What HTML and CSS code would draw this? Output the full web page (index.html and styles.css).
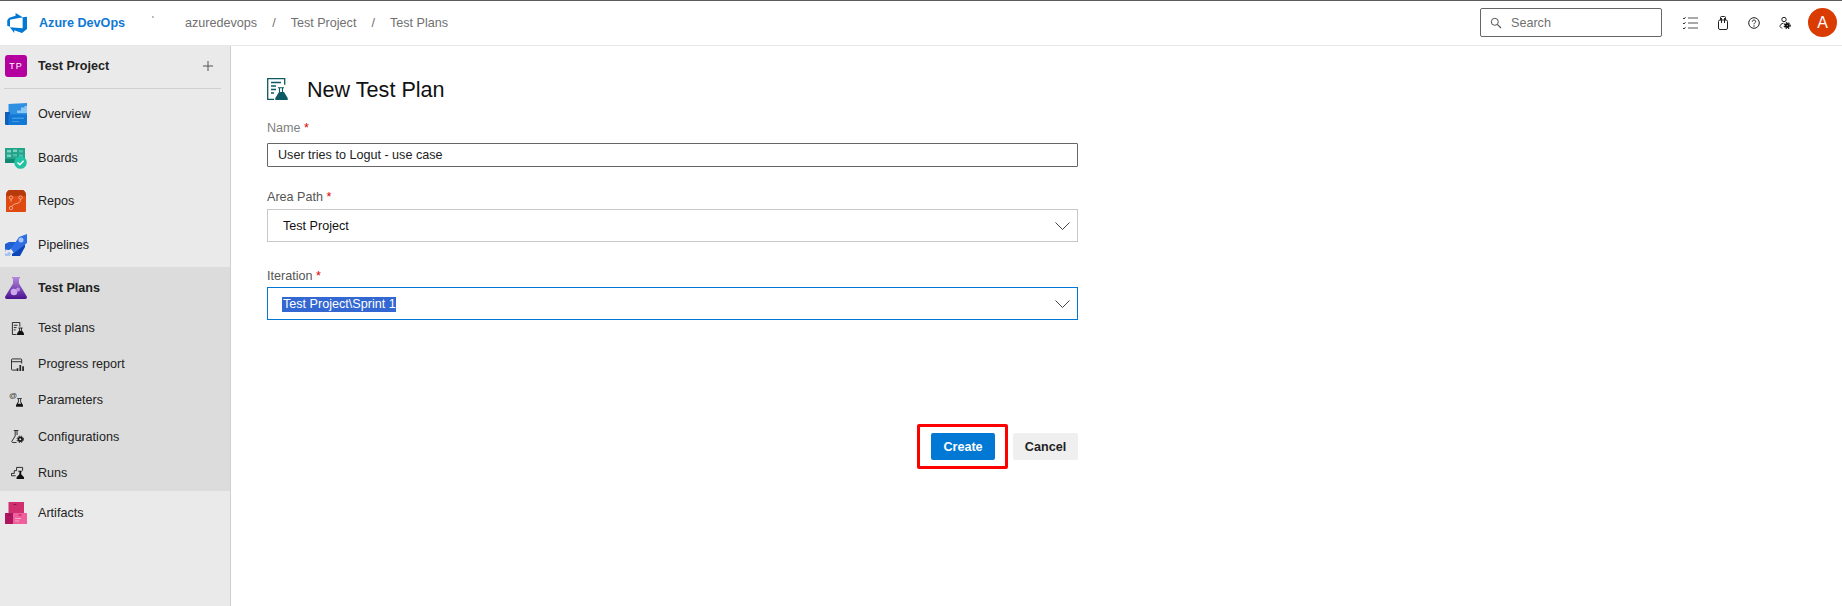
FILE: index.html
```html
<!DOCTYPE html>
<html lang="en">
<head>
<meta charset="utf-8">
<title>New Test Plan</title>
<link rel="stylesheet" href="styles.css">
</head>
<body>
<header class="topbar">
  <div class="brand">
    <svg class="brand-logo" width="20" height="20" viewBox="1 1 16 16"><path fill="#0078d4" d="M17 4v9.740l-4 3.280-6.200-2.260V17l-3.510-4.590 10.230.8V4.440zm-3.410.49L7.850 1v2.290L2.730 4.800 1.200 6.740v4.380l2.180.96V6.430z"/></svg>
    <span class="brand-name">Azure DevOps</span>
  </div>
  <span class="tick">'</span>
  <nav class="crumbs">
    <span>azuredevops</span><span class="sep">/</span><span>Test Project</span><span class="sep">/</span><span>Test Plans</span>
  </nav>
  <div class="search">
    <svg width="12" height="12" viewBox="0 0 12 12"><circle cx="4.800" cy="4.800" r="3.500" fill="none" stroke="#555" stroke-width="1"/><path d="M7.300 7.300 11 11" stroke="#555" stroke-width="1.200"/></svg>
    <span>Search</span>
  </div>
  <div class="tools">
    <svg width="16" height="14" viewBox="0 0 16 14" fill="none" stroke="#333"><path d="M6 2h10M6 7h10M6 12h10" stroke="#555" stroke-width="1.100"/><path d="M1 2 2 3 3.500 1.200M1 7 2 8 3.500 6.200M1 12 2 13 3.500 11.200" stroke-width="1"/></svg>
    <svg width="10" height="14" viewBox="0 0 10 14" fill="none" stroke="#222"><rect x=".5" y="4" width="9" height="9.500" rx="1.500"/><path d="M2.500 4V1.500a1 1 0 0 1 1-1h3a1 1 0 0 1 1 1V4M3.500 2v5M6.500 2v5"/></svg>
    <svg width="12" height="12" viewBox="0 0 12 12" fill="none"><circle cx="6" cy="6" r="5.300" stroke="#222"/><path d="M4.300 4.700C4.300 3.700 5 3.100 6 3.100s1.700.6 1.700 1.500C7.700 5.800 6 5.800 6 7.300" stroke="#222"/><circle cx="6" cy="9" r=".7" fill="#222"/></svg>
    <svg width="14" height="14" viewBox="0 0 14 14" fill="none"><circle cx="5" cy="3.500" r="2.200" stroke="#222"/><path d="M4.500 7.200C2.500 7.500 1 8.800 1 10.500L3 12.500" stroke="#222"/><circle cx="8.200" cy="9.500" r="1.500" stroke="#111" stroke-width="2"/><circle cx="8.200" cy="9.500" r="3" stroke="#111" stroke-width="1.200" stroke-dasharray="1.300 1.200"/></svg>
    <div class="avatar">A</div>
  </div>
</header>
<div class="shell">
  <aside class="sidebar">
    <div class="project">
      <span class="project-badge">TP</span>
      <span class="project-name">Test Project</span>
      <svg class="plus" width="12" height="12" viewBox="0 0 12 12"><path d="M6 1v10M1 6h10" stroke="#555" stroke-width="1"/></svg>
    </div>
    <div class="divider"></div>
    <a class="hub">
      <svg width="22" height="22" viewBox="0 0 22 22"><path fill="#2f8fe0" d="M3.500 1 22 0v15H3.500z"/><path fill="#8cc8f5" d="M12 10V7.500h4V4.500h3.500V3H22v7z"/><path fill="#0e5fb8" d="M0 9h5v13H1a1 1 0 0 1-1-1z"/><path fill="#1178d6" d="M3.500 11.500H22v9.500a1 1 0 0 1-1 1H3.500z"/><path fill="#5db0ee" opacity=".6" d="M7 14.500h12V16H7zM7 18h7v1H7z"/></svg>
      <span>Overview</span>
    </a>
    <a class="hub">
      <svg width="22" height="22" viewBox="0 0 22 22"><path fill="#22a38a" d="M0 1h20v15H0z"/><path fill="#0e7a66" opacity=".7" d="M0 12h20v4H0z"/><path fill="#7dd3c0" d="M2 3h4v2.500H2zM2 7.500h4V10H2zM8 2.500h4V5H8z"/><path fill="#4cc0a9" d="M14 3h4v2.500h-4zM8 7h4v2.500H8zM14 7.500h4V10h-4z"/><circle cx="15.500" cy="15.500" r="6.300" fill="#1fc2a2"/><path d="m12.500 15.500 2.300 2.300 3.800-4" fill="none" stroke="#fff" stroke-width="1.500"/></svg>
      <span>Boards</span>
    </a>
    <a class="hub">
      <svg width="22" height="22" viewBox="0 0 22 22"><path fill="#e04a12" d="M1 5C1 2 3 0 5 0h12c2 0 4 2 4 5v16a1 1 0 0 1-1 1H1z"/><path fill="#b83a0a" d="M1 6V5C1 2 3 0 5 0h12c2 0 4 2 4 5v1z"/><g fill="none" stroke="#f3a88a" stroke-width="1"><circle cx="6" cy="7.500" r="1.700"/><circle cx="15.500" cy="7.500" r="1.700"/><circle cx="6" cy="18" r="1.700"/><path d="M15.500 9.200c0 3.500-1.500 3.500-4.500 4.500-2 .7-4.200 1.500-4.200 2.800M6 9.200v2.500"/></g></svg>
      <span>Repos</span>
    </a>
    <a class="hub">
      <svg width="22" height="22" viewBox="0 0 22 22"><path fill="#1f5fd6" d="M0 10 4 8h8l-6 7-2 1H0z"/><path fill="#0e46b8" d="M7 20 20 9v4l-5 9H7z"/><path fill="#2f6fe6" d="M6 15 14 3 22 0v9L9 19z"/><path fill="#a5c2f2" d="M0 15.500h2.500L0 18zM0 22v-3.500L1.500 20 4 17.500 6.500 20l-2 2z"/><circle cx="16" cy="6" r="2.500" fill="#a9c6f5"/></svg>
      <span>Pipelines</span>
    </a>
    <div class="group">
      <a class="hub hub-plans">
        <svg width="22" height="22" viewBox="0 0 22 22"><defs><linearGradient id="flask" x1="0" y1="0" x2="0" y2="1"><stop offset="0" stop-color="#b48ae0"/><stop offset="1" stop-color="#4a128f"/></linearGradient></defs><path fill="url(#flask)" d="M7 0h8v1.500h-1v5L21.800 19.500A1.800 1.800 0 0 1 20.300 22H1.700A1.800 1.800 0 0 1 .2 19.500L8 6.500v-5H7z"/><circle cx="9" cy="15" r="3.300" fill="#cda9ec"/><circle cx="13" cy="12.500" r="2" fill="#bd90e6"/></svg>
        <span>Test Plans</span>
      </a>
      <a class="sub">
        <svg width="13" height="13" viewBox="0 0 14 14" fill="none" stroke="#222"><path d="M6 13.500H1.500v-13h8v4.500"/><path d="M3 3.500h4M3 6h3M3 8.500h2"/><path d="M8 6.500h4.500M9.200 6.500v3M11.300 6.500v3"/><path fill="#111" stroke="none" d="M8.500 9.500h3.500l2 3v1.500H6.500v-1.500z"/></svg>
        <span>Test plans</span>
      </a>
      <a class="sub">
        <svg width="13" height="13" viewBox="0 0 14 14" fill="none" stroke="#222"><path d="M6 13H1.500a1 1 0 0 1-1-1V2A1 1 0 0 1 1.500 1h9a1 1 0 0 1 1 1v4M.5 4h11"/><path stroke-width="1.800" d="M7 14V11M10 14V7.500M13 14V9"/></svg>
        <span>Progress report</span>
      </a>
      <a class="sub">
        <span class="param-icon">
          <span class="at">@</span>
          <svg width="7" height="9" viewBox="0 0 9 11"><path fill="#111" d="M1.500 0h6v1h-1v3.500L9 9v2H0V9l2.500-4.500V1h-1z"/><path fill="#dcdcdc" d="M3.500 1h2v3.700L6.500 7h-4l1-2.300z"/></svg>
        </span>
        <span>Parameters</span>
      </a>
      <a class="sub">
        <svg width="13" height="13" viewBox="0 0 14 14" fill="none" stroke="#222"><path d="M3 .5h5M4.500 .5v6L1 12a1 1 0 0 0 1 1.500h4M6.500 .5v5"/><circle cx="10" cy="10" r="2" stroke="#111" stroke-width="1.800"/><circle cx="10" cy="10" r="3.500" stroke="#111" stroke-dasharray="1.500 1.300"/></svg>
        <span>Configurations</span>
      </a>
      <a class="sub">
        <svg width="13" height="13" viewBox="0 0 14 14" fill="none" stroke="#222"><path d="M5 10.500H.5V8h3V5H6V1.500h6.500V5"/><path fill="#111" stroke="none" d="M7.500 5H12v1h-1v3l3 3v2H6v-2l3-3V6H7.500z"/></svg>
        <span>Runs</span>
      </a>
    </div>
    <a class="hub">
      <svg width="22" height="22" viewBox="0 0 22 22"><path fill="#d0306f" d="M3.500 0H19v11H3.500z"/><path fill="#b01560" d="M0 11h8v11H0z"/><path fill="#ef5f9c" d="M8 11h14v11H8z"/><path fill="#8d1450" d="M8.500 2h3v1h-3zM3 12.500h3v1H3z"/><path fill="#b01560" d="M13.500 12.500h3v1h-3z"/><path fill="#f9a6c7" d="M10 16h6v1h-6zM10 18.500h4v1h-4z"/></svg>
      <span>Artifacts</span>
    </a>
  </aside>
  <main class="content">
    <div class="title-row">
      <svg width="21" height="22" viewBox="0 0 21 22" fill="none" stroke="#0e5a63" stroke-width="1.300"><path d="M7 21.300H.7V.7h17v6"/><path d="M4 4.500h10M4 8h5M4 11.500h5M4 15h3"/><path d="M11 9.700h6M12.500 9.700v4.800M15.500 9.700v4.800" stroke-width="1.100"/><path fill="#0e5a63" stroke="none" d="M12 14h5l3.700 6v2H8.300v-2z"/></svg>
      <h1>New Test Plan</h1>
    </div>
    <form class="form">
      <label class="label label-name">Name <em>*</em></label>
      <div class="input">User tries to Logut - use case</div>
      <label class="label label-area">Area Path <em>*</em></label>
      <div class="select">
        <span>Test Project</span>
        <svg class="chev" width="15" height="8" viewBox="0 0 15 8"><path d="m.5.500 7 7 7-7" fill="none" stroke="#444"/></svg>
      </div>
      <label class="label label-iter">Iteration <em>*</em></label>
      <div class="select select-focus">
        <span class="selected">Test Project\Sprint 1</span>
        <svg class="chev" width="15" height="8" viewBox="0 0 15 8"><path d="m.5.500 7 7 7-7" fill="none" stroke="#444"/></svg>
      </div>
      <div class="actions">
        <div class="highlight"><button type="button" class="btn btn-primary">Create</button></div>
        <button type="button" class="btn">Cancel</button>
      </div>
    </form>
  </main>
</div>
</body>
</html>
```
FILE: styles.css
```css
* { box-sizing: border-box; }
html, body { margin: 0; height: 100%; }
body {
  font-family: "Liberation Sans", Arial, sans-serif;
  font-size: 12.600px;
  color: #222;
  background: #fff;
  overflow: hidden;
}
.topbar {
  height: 46px;
  border-top: 1px solid #5c5c5c;
  border-bottom: 1px solid #e8e8e8;
  display: flex;
  align-items: center;
  padding: 0 5px 1px 0;
}
.brand { display: flex; align-items: center; padding-left: 7px; width: 152px; }
.brand-logo { flex: none; }
.brand-name { margin-left: 12px; font-weight: 700; color: #0f78d4; }
.tick { width: 33px; color: #555; font-size: 9px; margin-top: -8px; }
.crumbs { flex: 1; display: flex; color: #707070; }
.sep { margin: 0 15px; }
.search {
  width: 182px;
  height: 29px;
  border: 1px solid #666;
  border-radius: 2px;
  display: flex;
  align-items: center;
  padding-left: 9px;
  gap: 9px;
  color: #707070;
}
.tools { display: flex; align-items: center; margin-left: 20px; }
.tools svg { margin-right: 20px; }
.tools svg:nth-child(3) { margin-right: 19px; }
.tools svg:nth-child(4) { margin-right: 15px; }
.avatar {
  width: 29px;
  height: 29px;
  border-radius: 50%;
  background: #da3b01;
  color: #fff;
  display: flex;
  align-items: center;
  justify-content: center;
  font-size: 16px;
}
.shell { display: flex; height: 560px; }
.sidebar {
  width: 231px;
  flex: none;
  background: #eaeaea;
  border-right: 1px solid #cfcfcf;
}
.project { height: 42px; display: flex; align-items: center; padding: 0 0 3px 5px; }
.project-badge {
  width: 22px;
  height: 22px;
  border-radius: 3px;
  background: #b4009e;
  color: #fff;
  font-size: 9px;
  letter-spacing: 1px;
  display: flex;
  align-items: center;
  justify-content: center;
}
.project-name { margin-left: 11px; font-weight: 700; flex: 1; }
.plus { margin-right: 16px; }
.divider { height: 1px; background: #cfcfcf; margin: 0 9px 3.300px 4px; }
.hub { display: flex; align-items: center; height: 43.500px; padding-left: 5px; gap: 11px; }
.hub svg { flex: none; }
.group { background: #dcdcdc; margin-top: .7px; }
.hub-plans { font-weight: 700; height: 43px; padding-bottom: 1px; }
.sub { display: flex; align-items: center; height: 36.200px; padding-left: 11px; gap: 14px; }
.sub svg { flex: none; }
.param-icon { width: 13px; height: 14px; flex: none; display: flex; }
.at { font-size: 8px; width: 7px; line-height: 10px; margin-left: -2px; margin-top: -2px; color: #333; flex: none; }
.param-icon svg { margin-top: 5px; }
.content { flex: 1; padding: 32px 0 0 36px; }
.title-row { display: flex; align-items: center; gap: 19px; height: 22px; }
h1 { margin: 0; padding-top: 1px; font-size: 21.600px; font-weight: 400; color: #111; }
.form { width: 811px; padding-top: 21px; }
.label { display: block; line-height: 15px; color: #555; margin-bottom: 4px; }
.label em { color: #d00; font-style: normal; }
.label-name { color: #808080; margin-bottom: 7px; }
.label-area { margin-top: 23px; }
.label-iter { margin-top: 27px; margin-bottom: 3px; }
.input {
  height: 24px;
  border: 1px solid #666;
  border-radius: 1px;
  padding-left: 10px;
  display: flex;
  align-items: center;
}
.select {
  height: 33px;
  border: 1px solid #c8c8c8;
  display: flex;
  align-items: center;
  justify-content: space-between;
  padding: 0 7px 0 15px;
  color: #111;
}
.select-focus { border-color: #0078d4; padding-left: 14px; }
.selected { background: #3367d1; color: #fff; line-height: 15px; padding-left: 1px; margin-top: 1px; }
.actions { display: flex; justify-content: flex-end; align-items: center; gap: 5px; margin-top: 104px; }
.highlight {
  border: 3px solid #f00;
  border-radius: 2px;
  padding: 6px 10px 6px 11px;
  display: flex;
}
.btn {
  height: 27px;
  width: 65px;
  border: 0;
  border-radius: 2px;
  background: #efefef;
  color: #222;
  font: 700 12.600px "Liberation Sans", Arial, sans-serif;
  padding: 0;
}
.btn-primary { background: #0078d4; color: #fff; width: 64px; }
```
